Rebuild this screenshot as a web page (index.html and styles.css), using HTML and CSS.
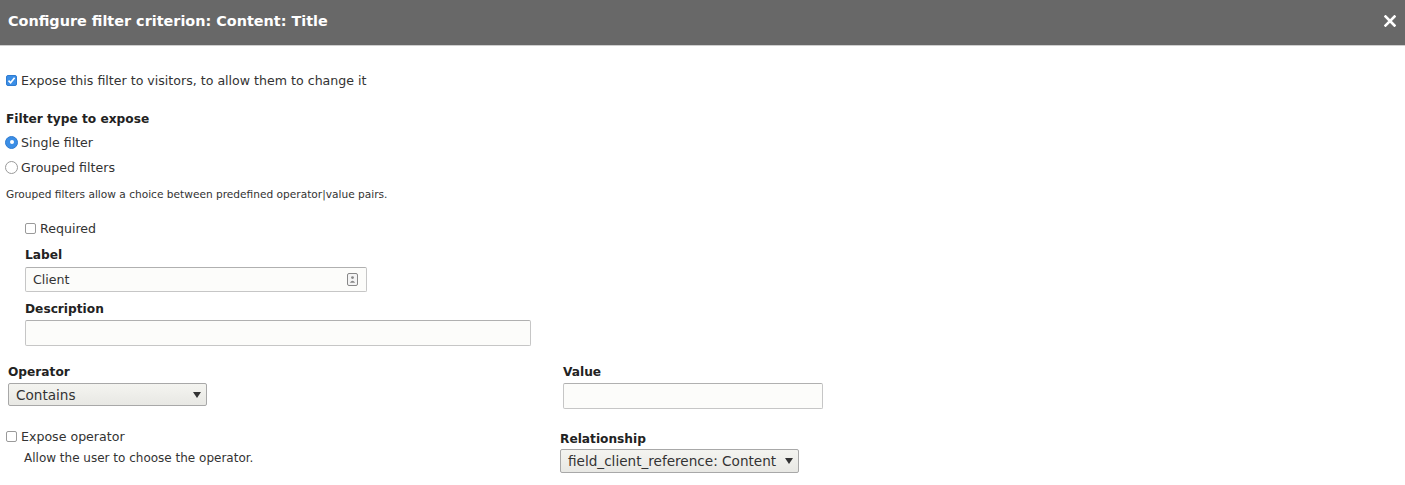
FILE: index.html
```html
<!DOCTYPE html>
<html>
<head>
<meta charset="utf-8">
<link rel="stylesheet" href="styles.css">
</head>
<body>
<div class="dialog">
  <div class="titlebar">
    <span class="title">Configure filter criterion: Content: Title</span>
    <span class="close">
      <svg width="12" height="12" viewBox="0 0 12 12"><path d="M1.5 1.5 L10.5 10.5 M10.5 1.5 L1.5 10.5" stroke="#fff" stroke-width="2.6" stroke-linecap="square"/></svg>
    </span>
  </div>
  <div class="content">
    <div class="row expose">
      <span class="cb checked"><svg width="9" height="9" viewBox="0 0 9 9"><path d="M1.5 4.6 L3.6 6.8 L7.6 1.8" stroke="#fff" stroke-width="1.6" fill="none"/></svg></span>
      <span class="txt">Expose this filter to visitors, to allow them to change it</span>
    </div>

    <div class="heading ftype">Filter type to expose</div>
    <div class="row radio1">
      <span class="rb on"><span class="dot"></span></span>
      <span class="txt">Single filter</span>
    </div>
    <div class="row radio2">
      <span class="rb"></span>
      <span class="txt">Grouped filters</span>
    </div>
    <div class="small desc1">Grouped filters allow a choice between predefined operator|value pairs.</div>

    <div class="indent">
      <div class="row req">
        <span class="cb"></span>
        <span class="txt">Required</span>
      </div>
      <div class="heading lbl">Label</div>
      <div class="input label-input"><span class="val">Client</span>
        <span class="contact"><svg width="11" height="13" viewBox="0 0 11 13"><rect x="0.5" y="0.5" width="10" height="12" rx="1.5" fill="#f4f4f4" stroke="#888"/><circle cx="5.5" cy="4.6" r="1.4" fill="#888"/><path d="M2.8 9.8 Q5.5 5.8 8.2 9.8 Z" fill="#888"/></svg></span>
      </div>
      <div class="heading dlbl">Description</div>
      <div class="input desc-input"></div>
    </div>

    <div class="cols">
      <div class="colL">
        <div class="heading oplbl">Operator</div>
        <div class="select op-select"><span>Contains</span><span class="arrow"></span></div>
        <div class="row expop">
          <span class="cb"></span>
          <span class="txt">Expose operator</span>
        </div>
        <div class="help">Allow the user to choose the operator.</div>
      </div>
      <div class="colR">
        <div class="heading vlbl">Value</div>
        <div class="input value-input"></div>
        <div class="heading rlbl">Relationship</div>
        <div class="select rel-select"><span>field_client_reference: Content</span><span class="arrow"></span></div>
      </div>
    </div>
  </div>
</div>
</body>
</html>
```
FILE: styles.css
```css
* { box-sizing: border-box; }
html, body { margin: 0; padding: 0; background: #fff; }
body { font-family: "DejaVu Sans", "Lucida Grande", sans-serif; color: #333; font-size: 12.6px; }
.dialog { width: 1405px; height: 485px; overflow: hidden; }
.titlebar {
  height: 46px; background: #686868; border-bottom: 1px solid #cfcfcf;
  display: flex; align-items: center; justify-content: space-between;
  padding: 0 8px 3px 8px;
}
.title { color: #fff; font-weight: bold; font-size: 14.4px; }
.close { display: flex; margin-right: 1px; }
.content { padding-top: 1px; }
.row { display: flex; align-items: center; height: 16px; }
.cb {
  width: 11px; height: 11px; border: 1px solid #9a9a9a; border-radius: 2px; background: #fff;
  display: inline-flex; align-items: center; justify-content: center; margin-right: 4px; flex: none;
}
.cb.checked { background: #3b8ee6; border-color: #2f7bd0; }
.rb {
  width: 13px; height: 13px; border: 1px solid #9a9a9a; border-radius: 50%; background: #fff;
  display: inline-flex; align-items: center; justify-content: center; margin-right: 3px; flex: none;
}
.rb.on { background: #3b8ee6; border-color: #2f7bd0; }
.rb .dot { width: 4px; height: 4px; border-radius: 50%; background: #fff; }
.txt { color: #333; font-size: 12.6px; }
.heading { font-weight: bold; font-size: 12.2px; color: #222; line-height: 16px; height: 16px; }
.small { font-size: 10.6px; color: #333; line-height: 14px; }

.expose { margin: 25px 0 0 6px; }
.ftype { margin: 23px 0 0 6px; }
.radio1 { margin: 7px 0 0 5px; }
.radio2 { margin: 9px 0 0 5px; }
.desc1 { margin: 12px 0 0 6px; height: 14px; }

.indent { padding-left: 25px; }
.req { margin-top: 19px; }
.lbl { margin-top: 11px; }
.input {
  border: 1px solid #c6c6c6; border-top-color: #b0b0b0; border-radius: 2px; background: #fcfcfa;
  display: flex; align-items: center;
}
.label-input { width: 342px; height: 25px; margin-top: 4px; padding: 0 7px; justify-content: space-between; }
.val { font-size: 12.6px; color: #333; }
.contact { display: flex; margin-right: 1px; }
.dlbl { margin-top: 9px; }
.desc-input { width: 506px; height: 26px; margin-top: 3px; }

.cols { display: flex; margin-top: 18px; }
.colL { width: 560px; padding-left: 8px; }
.colR { padding-left: 0; }
.vlbl { margin-left: 3px; }
.select {
  display: flex; align-items: center; justify-content: space-between;
  border: 1px solid #a8a8a8; border-radius: 2px;
  background: linear-gradient(#f4f4f0, #e8e8e4);
  font-size: 13.6px; color: #333;
}
.op-select { width: 199px; height: 23px; margin-top: 3px; padding: 0 5px 0 7px; }
.arrow { width: 0; height: 0; border-left: 4.5px solid transparent; border-right: 4.5px solid transparent; border-top: 6px solid #333; }
.expop { margin: 22px 0 0 -2px; }
.help { margin: 6px 0 0 16px; font-size: 12px; color: #333; line-height: 16px; }
.value-input { width: 260px; height: 26px; margin-top: 3px; margin-left: 3px; }
.rlbl { margin-top: 22px; }
.rel-select { width: 239px; height: 24px; margin-top: 2px; padding: 0 5px 0 7px; }
```
